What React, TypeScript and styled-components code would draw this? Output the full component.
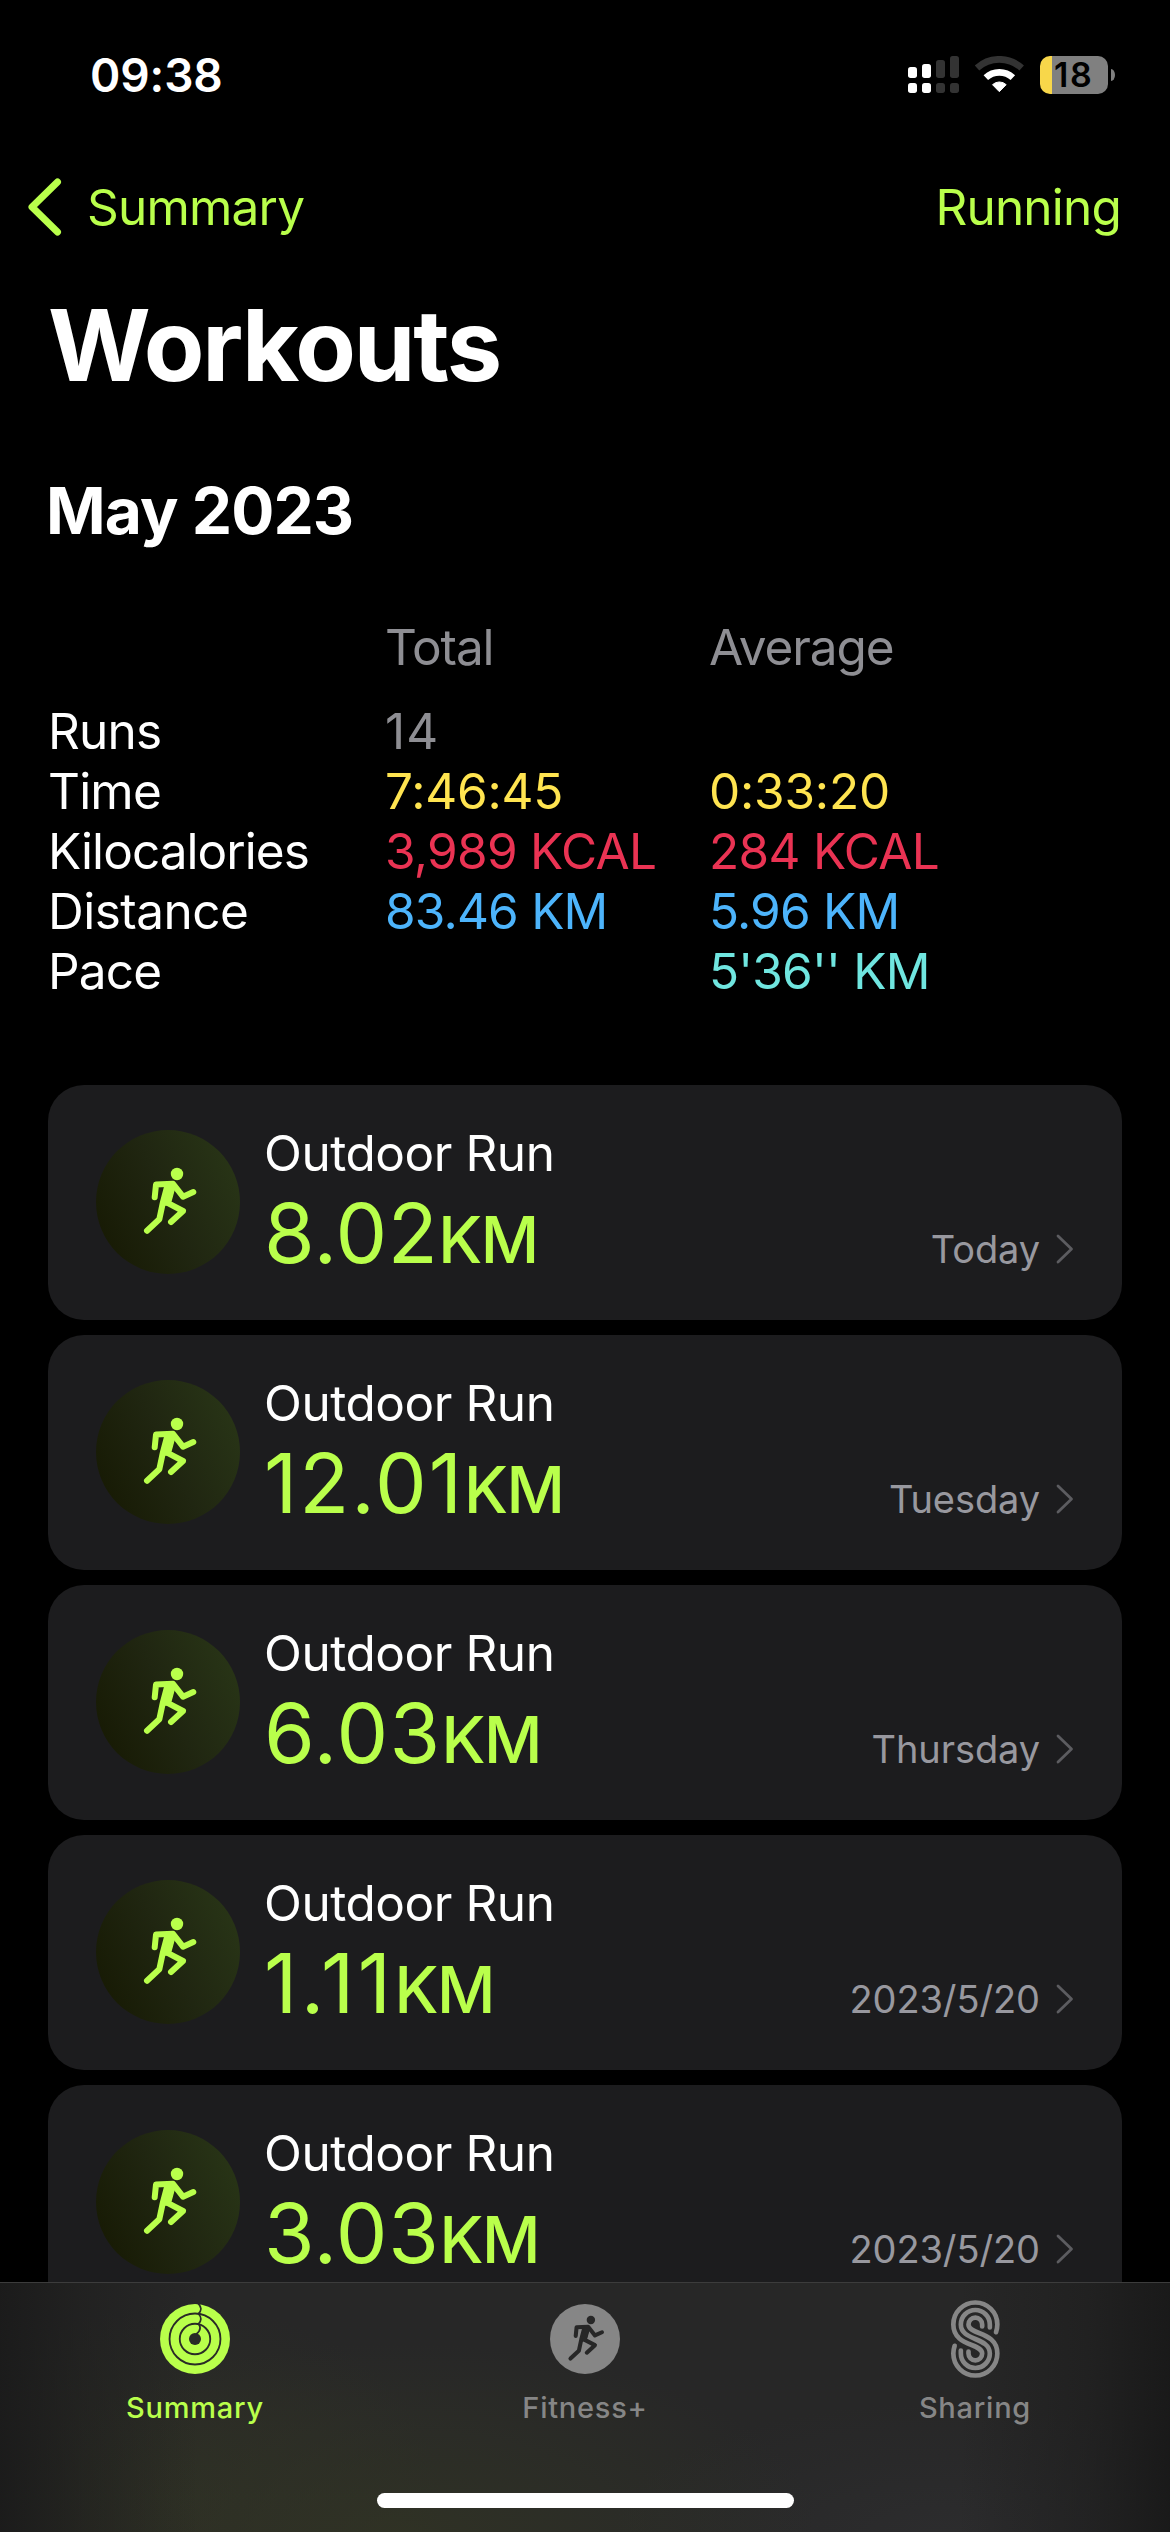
import React from "react";
import styled, { createGlobalStyle } from "styled-components";

const LIME = "#b9ff4b";
const GRAY = "#8e8e93";

const GlobalStyle = createGlobalStyle`
  html, body { margin: 0; padding: 0; background: #000; }
  * { box-sizing: border-box; }
`;

const Screen = styled.div`
  width: 1170px;
  height: 2532px;
  overflow: hidden;
  display: flex;
  flex-direction: column;
  background: #000;
  color: #fff;
  font-family: Inter, "Liberation Sans", sans-serif;
  font-size: 49.5px;
  line-height: 60px;
  letter-spacing: -0.8px;
  white-space: nowrap;
`;

const StatusBar = styled.header`
  height: 149px;
  padding: 0 55px 0 90px;
  display: flex;
  align-items: center;
  justify-content: space-between;
`;

const Clock = styled.span`
  font-size: 46px;
  font-weight: 600;
  letter-spacing: -0.1px;
`;

const StatusIcons = styled.div`
  display: flex;
  align-items: center;
  gap: 16px;
`;

const Battery = styled.div`
  display: flex;
  align-items: center;
  gap: 3px;
`;

const BatteryBody = styled.div`
  width: 68px;
  height: 38px;
  border-radius: 10px;
  display: flex;
  align-items: center;
  padding-left: 14px;
  background: linear-gradient(90deg, #f8d74a 12px, #808080 12px);
  color: #000;
  font-size: 34px;
  font-weight: 600;
  line-height: 38px;
  letter-spacing: 1.6px;
`;

const BatteryNub = styled.div`
  width: 4px;
  height: 12px;
  border-radius: 0 4px 4px 0 / 0 6px 6px 0;
  background: #808080;
`;

const NavBar = styled.nav`
  height: 116px;
  padding: 0 49px 0 27px;
  display: flex;
  align-items: center;
  justify-content: space-between;
  color: ${LIME};
`;

const BackLink = styled.div`
  display: flex;
  align-items: center;
  gap: 25px;
`;

const Title = styled.h1`
  margin: 20px 0 0 48px;
  font-size: 99px;
  font-weight: 700;
  line-height: 120px;
  letter-spacing: -2.1px;
`;

const Month = styled.h2`
  margin: 66px 0 0 46px;
  font-size: 64px;
  font-weight: 700;
  line-height: 80px;
  letter-spacing: -0.9px;
`;

const Stats = styled.section`
  margin: 66px 49px 0 48px;
  display: flex;
  flex-direction: column;
`;

const StatsRow = styled.div<{ $head?: boolean }>`
  height: 60px;
  margin-bottom: ${(p) => (p.$head ? 24 : 0)}px;
  display: grid;
  grid-template-columns: 337px 324px 1fr;
`;

const Cell = styled.span<{ $color?: string; $tracking?: number }>`
  color: ${(p) => p.$color || "#fff"};
  letter-spacing: ${(p) => p.$tracking ?? -0.8}px;
`;

const WorkoutList = styled.main`
  flex: 1;
  min-height: 0;
  overflow: hidden;
  margin: 84px 48px 0;
  display: flex;
  flex-direction: column;
  gap: 15px;
`;

const Card = styled.article`
  flex: none;
  height: 235px;
  border-radius: 36px;
  padding: 0 48px;
  display: flex;
  background: #1c1c1e;
`;

const Badge = styled.div`
  width: 144px;
  height: 144px;
  margin-top: 45px;
  border-radius: 50%;
  background: linear-gradient(65deg, #171a04 8%, #202611 50%, #293617 95%);
`;

const Details = styled.div`
  flex: 1;
  margin: 38px 0 0 24px;
  display: flex;
  flex-direction: column;
`;

const Activity = styled.span`
  letter-spacing: -0.45px;
`;

const Distance = styled.div<{ $tracking: number }>`
  margin-top: 11px;
  display: flex;
  align-items: baseline;
  color: ${LIME};
  font-size: 82px;
  line-height: 80px;
  letter-spacing: ${(p) => p.$tracking}px;
`;

const Unit = styled.span`
  font-size: 64px;
  font-weight: 450;
  letter-spacing: -1.5px;
`;

const When = styled.div`
  height: 60px;
  margin-top: 134px;
  display: flex;
  align-items: center;
  gap: 16px;
  color: #98989f;
  font-size: 38px;
  letter-spacing: -0.1px;
`;

const TabBar = styled.footer`
  height: 250px;
  border-top: 1px solid #3c3c3c;
  display: flex;
  flex-direction: column;
  align-items: center;
  background:
    linear-gradient(90deg, rgba(26, 26, 26, 0.9), rgba(28, 28, 27, 0.5) 7%, rgba(30, 30, 28, 0) 17%, rgba(30, 30, 30, 0) 82%, rgba(27, 27, 27, 0.5) 93%, rgba(24, 24, 24, 0.9)),
    radial-gradient(ellipse 420px 190px at 400px 250px, rgba(50, 53, 36, 0.75), rgba(50, 53, 38, 0.35) 55%, rgba(50, 53, 38, 0)),
    radial-gradient(ellipse 260px 200px at 180px 220px, rgba(47, 49, 35, 0.65), rgba(47, 49, 35, 0.3) 55%, rgba(47, 49, 35, 0)),
    radial-gradient(ellipse 330px 130px at 940px 250px, rgba(46, 46, 48, 0.7), rgba(46, 46, 48, 0)),
    #272727;
`;

const Tabs = styled.div`
  width: 100%;
  height: 210px;
  display: grid;
  grid-template-columns: repeat(3, 1fr);
`;

const Tab = styled.div<{ $active?: boolean }>`
  padding-top: 16px;
  display: flex;
  flex-direction: column;
  align-items: center;
  color: ${(p) => (p.$active ? LIME : "#868686")};
  font-size: 29px;
  font-weight: 500;
  line-height: 40px;
  letter-spacing: 0.75px;
`;

const TabIcon = styled.div`
  height: 80px;
  margin-bottom: 9px;
  display: flex;
  align-items: center;
`;

const HomeIndicator = styled.div`
  width: 417px;
  height: 15px;
  border-radius: 8px;
  background: #fff;
`;

const Runner = () => (
  <g stroke="currentColor" fill="none" strokeWidth="6" strokeLinecap="round" strokeLinejoin="round">
    <circle cx="81" cy="44" r="6.2" fill="currentColor" stroke="none" />
    <path d="M58.7 67.3 60 54.6 77 53.8 87 66.7 97.3 62" />
    <path d="M71 57 67 72 63.3 89.3 51 100.7" />
    <path d="M76.5 57 72 73.2 87 81 75 92" />
    <path d="M70 55h9.5L74 75l-6 1z" fill="currentColor" stroke="none" />
  </g>
);

const SignalIcon = () => (
  <svg width="51" height="37" viewBox="81 78 153 111">
    {[111, 102, 90, 78].map((top, i) => (
      <g key={top} fill={i < 2 ? "#fff" : "#333"}>
        <rect x={81 + i * 42} y={top} width="27" height={144 - top} rx="8" />
        <rect x={81 + i * 42} y="159" width="27" height="30" rx="8" />
      </g>
    ))}
  </svg>
);

const WifiIcon = () => (
  <svg width="49" height="37" viewBox="284 75 147 111">
    <path d="M290 111A99 99 0 0 1 424 111" fill="none" stroke="#333" strokeWidth="20" />
    <path d="M316.5 139.8A60 60 0 0 1 397.5 139.8" fill="none" stroke="#fff" strokeWidth="20" />
    <path d="M357 182 336.5 161A30 30 0 0 1 377.5 161Z" fill="#fff" stroke="#fff" strokeWidth="3" strokeLinejoin="round" />
  </svg>
);

const RingsIcon = () => (
  <svg width="70" height="70" viewBox="60 42 209 209">
    <circle cx="164.5" cy="146.5" r="104.5" fill={LIME} />
    <g fill="none" stroke="#292a27" strokeWidth="5.5">
      <circle cx="164.5" cy="146.5" r="76" />
      <circle cx="164.5" cy="146.5" r="45.5" />
      <path d="M174 41Q190 56 175 71Q189 87 175 101Q187 118 168 132" strokeWidth="5" />
    </g>
    <circle cx="164.5" cy="146.5" r="18" fill="#292a27" />
  </svg>
);

const FitnessIcon = () => (
  <svg width="70" height="70" viewBox="0 0 70 70">
    <circle cx="35" cy="35" r="35" fill="#868686" />
    <g color="#272727" transform="translate(-14.2 -13.9) scale(.68)">
      <Runner />
    </g>
  </svg>
);

const SharingIcon = () => (
  <svg width="49" height="78" viewBox="90 31.5 147 234">
    <g fill="none" stroke="#868686" strokeWidth="14" strokeLinecap="round">
      <path d="M225 128Q229 116 229 105A66 66 0 0 0 97 105C97 172 183.5 160 183.5 192A20.5 20.5 0 0 1 142.5 192V186" />
      <path d="M206.5 114V105A43.5 43.5 0 0 0 119.5 105C119.5 155 206.5 142 206.5 192A43.5 43.5 0 0 1 119.5 192V183" />
      <path d="M183.5 111V105A20.5 20.5 0 0 0 142.5 105C142.5 137 229 125 229 192A66 66 0 0 1 97 192Q97 181 101 169" />
    </g>
  </svg>
);

interface Stat {
  label: string;
  labelTracking?: number;
  total?: string;
  average?: string;
  color: string;
  tracking?: number;
}

const stats: Stat[] = [
  { label: "Runs", total: "14", color: GRAY, tracking: 1.2 },
  { label: "Time", total: "7:46:45", average: "0:33:20", color: "#ffe450", tracking: -0.2 },
  { label: "Kilocalories", labelTracking: -0.95, total: "3,989 KCAL", average: "284 KCAL", color: "#ea3353", tracking: -0.7 },
  { label: "Distance", labelTracking: -0.5, total: "83.46 KM", average: "5.96 KM", color: "#4db4fb" },
  { label: "Pace", average: "5'36'' KM", color: "#70e6e0" },
];

const workouts = [
  { distance: "8.02", tracking: 0.5, when: "Today" },
  { distance: "12.01", tracking: 2, when: "Tuesday" },
  { distance: "6.03", tracking: 1.4, when: "Thursday" },
  { distance: "1.11", tracking: 3.5, when: "2023/5/20" },
  { distance: "3.03", tracking: 0.7, when: "2023/5/20" },
];

export default function App() {
  return (
    <Screen>
      <GlobalStyle />
      <StatusBar>
        <Clock>09:38</Clock>
        <StatusIcons>
          <SignalIcon />
          <WifiIcon />
          <Battery>
            <BatteryBody>18</BatteryBody>
            <BatteryNub />
          </Battery>
        </StatusIcons>
      </StatusBar>
      <NavBar>
        <BackLink>
          <svg width="35" height="58" viewBox="0 0 35 58" fill="none" stroke={LIME} strokeWidth="7" strokeLinecap="round" strokeLinejoin="round">
            <path d="M30.5 4 5 29 30.5 54" />
          </svg>
          <span>Summary</span>
        </BackLink>
        <span>Running</span>
      </NavBar>
      <Title>Workouts</Title>
      <Month>May 2023</Month>
      <Stats>
        <StatsRow $head>
          <span />
          <Cell $color={GRAY} $tracking={-1.1}>Total</Cell>
          <Cell $color={GRAY} $tracking={-1.1}>Average</Cell>
        </StatsRow>
        {stats.map((s) => (
          <StatsRow key={s.label}>
            <Cell $tracking={s.labelTracking}>{s.label}</Cell>
            <Cell $color={s.color} $tracking={s.tracking}>{s.total}</Cell>
            <Cell $color={s.color} $tracking={s.tracking}>{s.average}</Cell>
          </StatsRow>
        ))}
      </Stats>
      <WorkoutList>
        {workouts.map((w) => (
          <Card key={w.distance}>
            <Badge>
              <svg width="144" height="144" viewBox="0 0 144 144" color={LIME}>
                <Runner />
              </svg>
            </Badge>
            <Details>
              <Activity>Outdoor Run</Activity>
              <Distance $tracking={w.tracking}>
                {w.distance}
                <Unit>KM</Unit>
              </Distance>
            </Details>
            <When>
              <span>{w.when}</span>
              <svg width="18" height="30" viewBox="0 0 18 30" fill="none" stroke="#5c5c60" strokeWidth="2.8" strokeLinecap="round" strokeLinejoin="round">
                <path d="M2 2 15.5 15 2 28" />
              </svg>
            </When>
          </Card>
        ))}
      </WorkoutList>
      <TabBar>
        <Tabs>
          <Tab $active>
            <TabIcon><RingsIcon /></TabIcon>
            Summary
          </Tab>
          <Tab>
            <TabIcon><FitnessIcon /></TabIcon>
            Fitness+
          </Tab>
          <Tab>
            <TabIcon><SharingIcon /></TabIcon>
            Sharing
          </Tab>
        </Tabs>
        <HomeIndicator />
      </TabBar>
    </Screen>
  );
}
